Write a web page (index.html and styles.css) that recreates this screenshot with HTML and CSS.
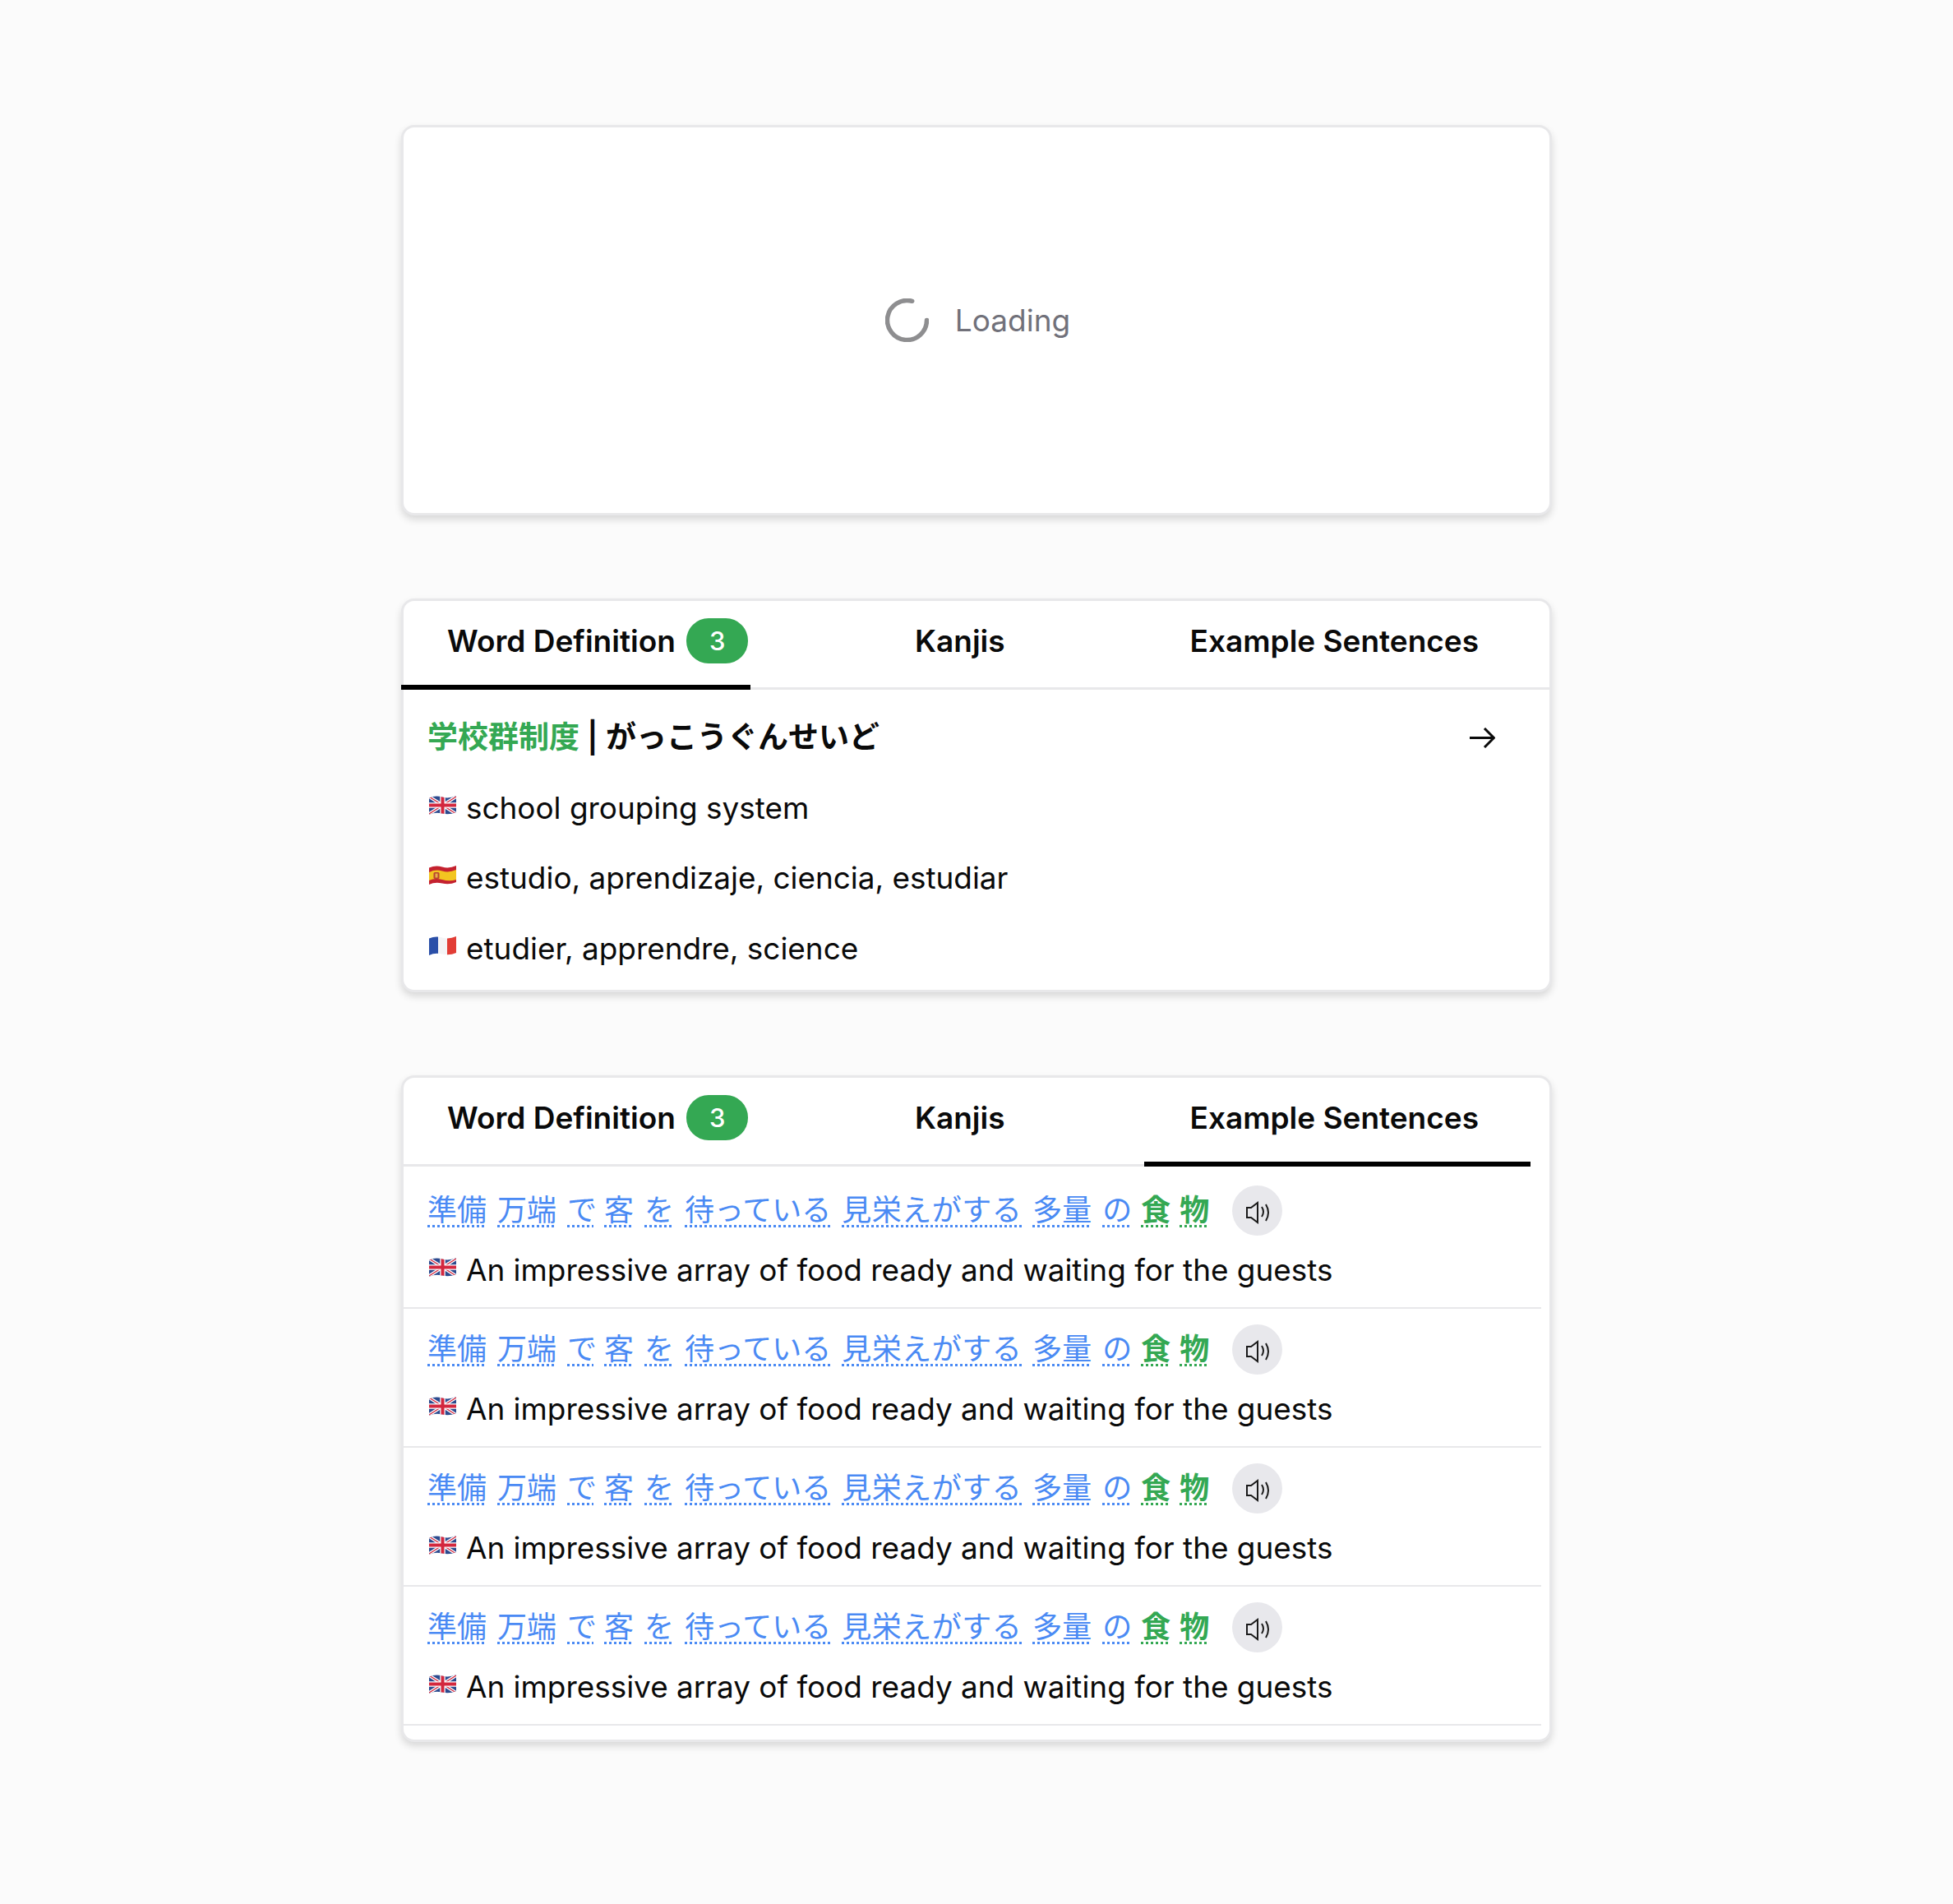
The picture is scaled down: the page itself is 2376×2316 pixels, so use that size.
FILE: index.html
```html
<!DOCTYPE html>
<html lang="en">
<head>
  <meta charset="UTF-8" />
  <title>Word cards</title>
  <link rel="stylesheet" href="styles.css">
</head>
<body>
  <svg class="defs" width="0" height="0" aria-hidden="true">
    <defs>
      <clipPath id="wave">
        <path d="M0 2.5 Q8 -1 16 1.5 T33 0 V20 Q25 23.5 16 21.5 T0 23 Z" />
      </clipPath>
      <symbol id="flag-uk" viewBox="0 0 33 23">
        <g clip-path="url(#wave)">
          <rect width="33" height="23" fill="#2c4a8e" />
          <path d="M0 1 L33 22 M33 1 L0 22" stroke="#fff" stroke-width="4" />
          <path d="M0 1 L33 22 M33 1 L0 22" stroke="#d3273e" stroke-width="1.4" />
          <path d="M16.5 0 V23 M0 11.5 H33" stroke="#fff" stroke-width="6.5" />
          <path d="M16.5 0 V23 M0 11.5 H33" stroke="#d3273e" stroke-width="4" />
        </g>
      </symbol>
      <symbol id="flag-es" viewBox="0 0 33 23">
        <g clip-path="url(#wave)">
          <rect width="33" height="23" fill="#c4212f" />
          <path d="M0 8 Q8 4 16 6.5 T33 5 V17 Q25 19.5 16 17 T0 18 Z" fill="#f3c520" />
          <rect x="5.5" y="8" width="7" height="8" rx="1.5" fill="#b8432f" />
          <rect x="7.5" y="9.5" width="3" height="5" fill="#e8b04a" />
        </g>
      </symbol>
      <symbol id="flag-fr" viewBox="0 0 33 23">
        <g clip-path="url(#wave)">
          <rect width="33" height="23" fill="#f4f4f6" />
          <rect width="11" height="23" fill="#2a4fa8" />
          <rect x="22" width="11" height="23" fill="#e23d36" />
        </g>
      </symbol>
      <symbol id="speaker" viewBox="0 0 34 32">
        <path d="M3 12 H8 L16 6 V30 L8 24 H3 Z" />
        <path d="M21 11 Q25 17 21 23" />
        <path d="M26 8 Q32 18 26 28" />
      </symbol>
    </defs>
  </svg>

  <main class="page">
    <section class="card card-loading">
      <svg class="spinner" viewBox="0 0 53 53"><path d="M50.5 26.5 A24 24 0 1 1 32.7 3.3" /></svg>
      <span class="loading-text">Loading</span>
    </section>

    <section class="card card-word">
      <div class="tabs">
        <div class="tab tab-word active">Word Definition <span class="badge">3</span></div>
        <div class="tab tab-kanji">Kanjis</div>
        <div class="tab tab-sentences">Example Sentences</div>
      </div>
      <div class="word-head">
        <h2 class="word-title"><span class="green">学校群制度</span> <span class="bar">|</span> がっこうぐんせいど</h2>
        <svg class="arrow" viewBox="0 0 31 25"><path d="M0 12.5 H29 M18 1 L29.5 12.5 L18 24" /></svg>
      </div>
      <p class="meaning"><svg class="flag"><use href="#flag-uk" /></svg>school grouping system</p>
      <p class="meaning"><svg class="flag"><use href="#flag-es" /></svg>estudio, aprendizaje, ciencia, estudiar</p>
      <p class="meaning"><svg class="flag"><use href="#flag-fr" /></svg>etudier, apprendre, science</p>
    </section>

    <section class="card card-sentences">
      <div class="tabs tabs-short">
        <div class="tab tab-word">Word Definition <span class="badge">3</span></div>
        <div class="tab tab-kanji">Kanjis</div>
        <div class="tab tab-sentences active">Example Sentences</div>
      </div>

      <div class="sentences">
        <div class="sentence">
          <div class="jp-line">
            <span class="tok">準備</span><span class="tok">万端</span><span class="tok tight">で</span><span class="tok">客</span><span class="tok">を</span><span class="tok">待っている</span><span class="tok wide">見栄えがする</span><span class="tok">多量</span><span class="tok snug">の</span><span class="tok hit">食</span><span class="tok hit">物</span>
            <button class="sound"><svg class="speaker"><use href="#speaker" /></svg></button>
          </div>
          <p class="translation"><svg class="flag"><use href="#flag-uk" /></svg>An impressive array of food ready and waiting for the guests</p>
        </div>

        <div class="sentence">
          <div class="jp-line">
            <span class="tok">準備</span><span class="tok">万端</span><span class="tok tight">で</span><span class="tok">客</span><span class="tok">を</span><span class="tok">待っている</span><span class="tok wide">見栄えがする</span><span class="tok">多量</span><span class="tok snug">の</span><span class="tok hit">食</span><span class="tok hit">物</span>
            <button class="sound"><svg class="speaker"><use href="#speaker" /></svg></button>
          </div>
          <p class="translation"><svg class="flag"><use href="#flag-uk" /></svg>An impressive array of food ready and waiting for the guests</p>
        </div>

        <div class="sentence">
          <div class="jp-line">
            <span class="tok">準備</span><span class="tok">万端</span><span class="tok tight">で</span><span class="tok">客</span><span class="tok">を</span><span class="tok">待っている</span><span class="tok wide">見栄えがする</span><span class="tok">多量</span><span class="tok snug">の</span><span class="tok hit">食</span><span class="tok hit">物</span>
            <button class="sound"><svg class="speaker"><use href="#speaker" /></svg></button>
          </div>
          <p class="translation"><svg class="flag"><use href="#flag-uk" /></svg>An impressive array of food ready and waiting for the guests</p>
        </div>

        <div class="sentence">
          <div class="jp-line">
            <span class="tok">準備</span><span class="tok">万端</span><span class="tok tight">で</span><span class="tok">客</span><span class="tok">を</span><span class="tok">待っている</span><span class="tok wide">見栄えがする</span><span class="tok">多量</span><span class="tok snug">の</span><span class="tok hit">食</span><span class="tok hit">物</span>
            <button class="sound"><svg class="speaker"><use href="#speaker" /></svg></button>
          </div>
          <p class="translation"><svg class="flag"><use href="#flag-uk" /></svg>An impressive array of food ready and waiting for the guests</p>
        </div>
      </div>
    </section>
  </main>
</body>
</html>
```

FILE: styles.css
```css
* {
  box-sizing: border-box;
}

body {
  margin: 0;
  background: #fbfbfb;
  font-family: 'Inter', 'Noto Sans CJK JP', sans-serif;
  color: #0a0a0a;
}

.defs {
  display: block;
}

.page {
  width: 1400px;
  margin-left: 488px;
  padding: 152px 0 197px;
  display: flex;
  flex-direction: column;
  gap: 101px;
}

.card {
  background: #fff;
  border: 3px solid #e8e8ea;
  border-radius: 16px;
  box-shadow: 0 5px 10px rgba(0, 0, 0, 0.14);
}

.card-loading {
  height: 475px;
  display: flex;
  align-items: center;
  justify-content: center;
  gap: 32px;
  padding-left: 3px;
}

.spinner {
  width: 53px;
  height: 53px;
  fill: none;
  stroke: #8e8e90;
  stroke-width: 5.5;
  stroke-linecap: round;
}

.loading-text {
  font-size: 37px;
  color: #71717a;
}

.card-word {
  height: 479px;
}

.card-sentences {
  height: 811px;
}

.tabs {
  display: flex;
  height: 108px;
  margin-left: -3px;
  margin-right: -3px;
  box-shadow: inset 0 -3px 0 #e8e8ea;
}

.tabs-short {
  margin-right: 23px;
}

.tab {
  height: 108px;
  display: flex;
  align-items: center;
  padding: 0 56px 5px;
  border-bottom: 6px solid transparent;
  font-size: 37px;
  font-weight: 600;
  white-space: pre;
}

.tab.active {
  border-bottom-color: #000;
}

.tab-word {
  width: 425px;
  padding-right: 0;
}

.tab-kanji {
  margin-left: 144px;
  margin-right: 113px;
}

.tab-sentences {
  padding-right: 63px;
}

.badge {
  width: 75px;
  height: 55px;
  margin-left: 4px;
  border-radius: 27px;
  background: #34a853;
  color: #fff;
  font-size: 31px;
  font-weight: 500;
  display: flex;
  align-items: center;
  justify-content: center;
}

.word-head {
  display: flex;
  align-items: center;
  justify-content: space-between;
  padding: 33px 66px 0 29px;
}

.word-title {
  margin: 0;
  font-size: 37px;
  font-weight: 600;
  line-height: 50px;
}

.green {
  color: #34a853;
}

.bar {
  font-family: 'Inter', sans-serif;
  font-weight: 600;
}

.arrow {
  width: 31px;
  height: 25px;
  fill: none;
  stroke: #0a0a0a;
  stroke-width: 3;
}

.meaning {
  display: flex;
  align-items: center;
  margin: 35.5px 0 0;
  padding-left: 29px;
  height: 50px;
  font-size: 36.9px;
}

.meaning:first-of-type {
  margin-top: 35px;
}

.flag {
  width: 33px;
  height: 23px;
  margin: 0 12px 0 2px;
  flex-shrink: 0;
  position: relative;
  top: -3px;
}

.sentences {
  padding-top: 4px;
  margin-right: 10px;
}

.sentence {
  height: 169px;
  padding: 19px 0 0 29px;
  border-bottom: 2px solid #e8e8ea;
}

.jp-line {
  display: flex;
  align-items: center;
  gap: 13px;
  height: 61px;
  font-size: 36px;
}

.tok {
  padding-bottom: 7px;
  line-height: 46px;
  font-family: 'Noto Sans CJK JP', sans-serif;
  color: #4a8af4;
  text-decoration: underline dotted;
  text-decoration-thickness: 3px;
  text-underline-offset: 5px;
}

.tok.tight {
  letter-spacing: -4px;
}

.tok.snug {
  letter-spacing: -2px;
}

.tok.wide {
  letter-spacing: 0.5px;
}

.tok.hit {
  margin-right: -2px;
  color: #34a853;
  font-weight: 700;
}

.sound {
  width: 61px;
  height: 61px;
  margin-left: 17px;
  padding: 0 0 0 2px;
  border: none;
  border-radius: 50%;
  background: #e8e8ec;
  display: flex;
  align-items: center;
  justify-content: center;
}

.speaker {
  width: 34px;
  height: 32px;
  fill: none;
  stroke: #1a1a1a;
  stroke-width: 2;
}

.translation {
  display: flex;
  align-items: center;
  margin: 16px 0 0;
  height: 50px;
  font-size: 36.9px;
}
```
